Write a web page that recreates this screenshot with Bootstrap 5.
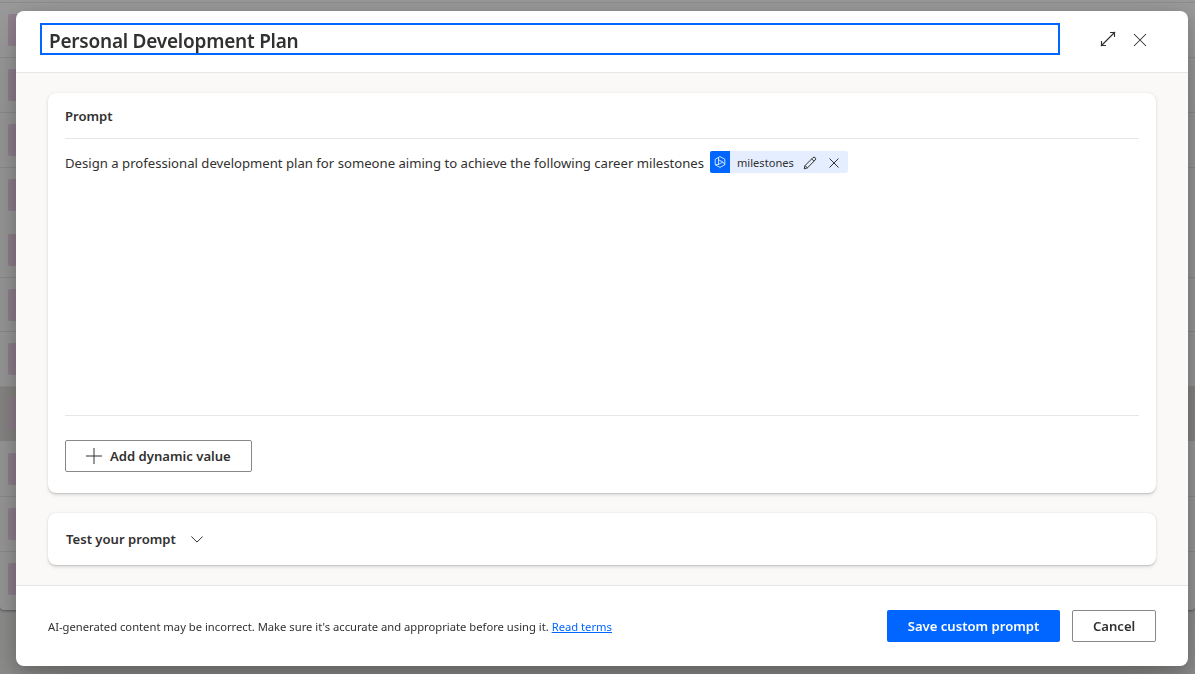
<!DOCTYPE html>
<html lang="en">
<head>
<meta charset="utf-8">
<meta name="viewport" content="width=device-width, initial-scale=1">
<title>Personal Development Plan</title>
<link rel="stylesheet" href="https://cdn.jsdelivr.net/npm/bootstrap@5.3.0/dist/css/bootstrap.min.css">
<style>
body{font-family:"Noto Sans","Open Sans",sans-serif;font-size:13.15px;color:#323130;background:#f0efee;height:674px;overflow:hidden}
.record-list{background:#fff;height:610px;border-radius:0 0 4px 4px;box-shadow:0 1px 3px rgba(0,0,0,.4);padding-top:2.2px}
.record-row{height:54.88px;border-top:1px solid #ebe9e7;padding-left:8px}
.record-row.plain{border-top-color:transparent}
.record-row.selected{background:#e3e1de}
.record-tile{width:32px;height:32px;border-radius:2px;background:#f0d6ec}
.overlay{background:rgba(0,0,0,.4);padding:11px 7px 8px 16px}
.dialog{border-radius:8px;box-shadow:0 25.6px 57.6px rgba(0,0,0,.22),0 4.8px 14.4px rgba(0,0,0,.18);overflow:hidden}
.dialog-top{height:62px;border-bottom:1px solid #e7e6e5;padding:12px 40px 0 24px}
.title-input{width:1020px;height:32px;border:2px solid #06f;outline:0;padding:3px 7px 0;font-size:19px;line-height:27px;font-weight:600;letter-spacing:-.23px}
.dialog-tools{gap:16px}
.tool-close{margin-top:1px}
.dialog-main{background:#faf9f8;padding:20px 32px;gap:20px}
.panel{background:#fff;border-radius:8px;box-shadow:0 1.6px 3.6px rgba(0,0,0,.13),0 .3px .9px rgba(0,0,0,.11)}
.panel-prompt{height:400px;padding:0 17px}
.panel-test{height:52px;padding:0 18px;gap:15px}
.section-title{font-size:13.1px;font-weight:600;line-height:20px}
.prompt-title{height:46px;padding-top:13px;border-bottom:1px solid #e7e6e5}
.prompt-text{height:277px;border-bottom:1px solid #e7e6e5;padding-top:12px}
.prompt-copy{line-height:22px;padding-top:1px;white-space:nowrap;width:639px;letter-spacing:-.005px}
.token{height:22px;background:#e5eeff;border-radius:2px;font-size:11.1px;margin-left:6px;width:138px;overflow:hidden}
.token-mark{width:20px;height:22px;background:#06f}
.token-mark svg{stroke:#fff;stroke-width:.8}
.token-name{margin-left:7px;width:57px;white-space:nowrap;padding-top:3px}
.token-edit{margin:1px 0 0 9px}
.token-close{margin:1px 0 0 12px}
.btn-plain,.btn-save{height:32px;border-radius:2px;font-size:13.1px;font-weight:600;padding:0 20px;line-height:20px;white-space:nowrap}
.btn-plain{border:1px solid #8a8886;background:#fff;color:#323130}
.btn-save{background:#06f;color:#fff;width:173px;margin-right:12px}
.btn-add{width:187px;margin-top:24px;gap:8px}
.btn-cancel{width:84px}
.dialog-bottom{height:81px;border-top:1px solid #e7e6e5;padding:0 32px}
.notice{font-size:11.23px;line-height:16px;padding-top:2px}
.notice a{color:#06f}
svg{display:block;flex:none;fill:none;stroke:#323130}
</style>
</head>
<body>
<div class="record-list" aria-hidden="true">
  <div class="record-row d-flex align-items-center"><div class="record-tile"></div></div>
  <div class="record-row d-flex align-items-center"><div class="record-tile"></div></div>
  <div class="record-row d-flex align-items-center"><div class="record-tile"></div></div>
  <div class="record-row d-flex align-items-center"><div class="record-tile"></div></div>
  <div class="record-row plain d-flex align-items-center"><div class="record-tile"></div></div>
  <div class="record-row d-flex align-items-center"><div class="record-tile"></div></div>
  <div class="record-row d-flex align-items-center"><div class="record-tile"></div></div>
  <div class="record-row selected d-flex align-items-center"><div class="record-tile"></div></div>
  <div class="record-row plain d-flex align-items-center"><div class="record-tile"></div></div>
  <div class="record-row d-flex align-items-center"><div class="record-tile"></div></div>
  <div class="record-row d-flex align-items-center"><div class="record-tile"></div></div>
</div>
<div class="overlay position-fixed top-0 start-0 w-100 h-100">
  <div class="dialog bg-white d-flex flex-column h-100" role="dialog" aria-label="Personal Development Plan">
    <header class="dialog-top d-flex align-items-start justify-content-between">
      <div class="title-input" contenteditable="true" spellcheck="false">Personal Development Plan</div>
      <div class="dialog-tools d-flex pt-2">
        <svg width="16" height="16" viewBox="0 0 16 16"><path d="M1 15 15 1M10 1.500h4.500V6M1.500 10v4.500H6" stroke-width="1.15"/></svg>
        <svg class="tool-close" width="16" height="16" viewBox="0 0 16 16"><path d="m2 2 12 12M14 2 2 14" stroke-width="1.05"/></svg>
      </div>
    </header>
    <main class="dialog-main flex-grow-1 d-flex flex-column">
      <section class="panel panel-prompt">
        <div class="prompt-title section-title">Prompt</div>
        <div class="prompt-text d-flex align-items-start">
          <span class="prompt-copy">Design a professional development plan for someone aiming to achieve the following career milestones</span>
          <span class="token d-flex align-items-center">
            <span class="token-mark d-flex align-items-center justify-content-center"><svg width="12" height="12" viewBox="0 0 12 12"><path d="M6 .6 10.800 3.200v5.600L6 11.400 1.200 8.800V3.200ZM4.500 1.600v6.900L8.800 6 4.500 3.700M8.800 6l2 2.600M4.500 8.500 1.400 8.700"/></svg></span>
            <span class="token-name">milestones</span>
            <svg class="token-edit" width="14" height="14" viewBox="0 0 14 14"><path d="M1.200 12.800 2 9.600 9.900 1.700a1.550 1.550 0 0 1 2.300 2.300L4.400 11.900ZM8.700 2.900 11 5.200M2 9.600l2.400 2.300"/></svg>
            <svg class="token-close" width="10" height="10" viewBox="0 0 10 10"><path d="m.5.5 9 9M9.500.5l-9 9"/></svg>
          </span>
        </div>
        <button class="btn btn-plain btn-add d-flex align-items-center"><svg width="16" height="16" viewBox="0 0 16 16"><path d="M0 8h16M8 0v16"/></svg><span>Add dynamic value</span></button>
      </section>
      <section class="panel panel-test d-flex align-items-center">
        <span class="section-title">Test your prompt</span>
        <svg width="12" height="7" viewBox="0 0 12 7"><path d="m.4.500 5.600 5.600L11.600.5"/></svg>
      </section>
    </main>
    <footer class="dialog-bottom d-flex align-items-center">
      <div class="notice me-auto"><span>AI-generated content may be incorrect. Make sure it's accurate and appropriate before using it.</span> <a href="#">Read terms</a></div>
      <button class="btn btn-save border-0">Save custom prompt</button>
      <button class="btn btn-plain btn-cancel">Cancel</button>
    </footer>
  </div>
</div>
<script src="https://cdn.jsdelivr.net/npm/bootstrap@5.3.0/dist/js/bootstrap.bundle.min.js"></script>
</body>
</html>
